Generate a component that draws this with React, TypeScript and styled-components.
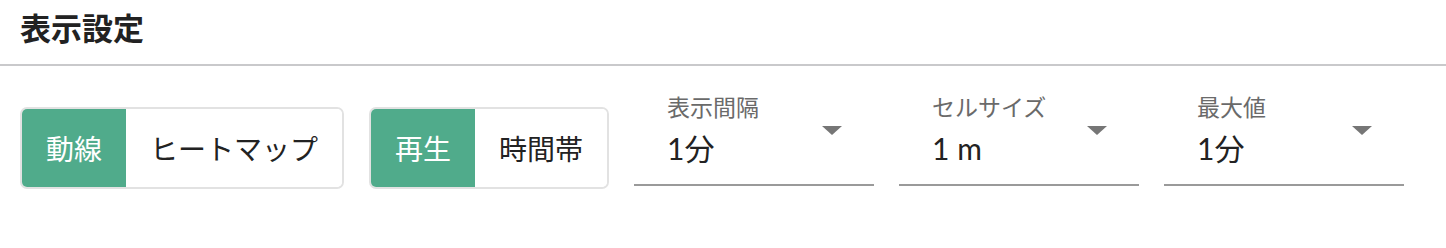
import React from "react";
import styled, { createGlobalStyle } from "styled-components";

const GlobalStyle = createGlobalStyle`
    body {
        margin: 0;
        background: #ffffff;
        font-family: "Lato", "Noto Sans CJK JP", sans-serif;
        color: #222222;
    }
`;

const Page = styled.div`
    width: 1446px;
    height: 248px;
    background: #ffffff;
`;

const Header = styled.div`
    padding: 8px 20px 16px;
    border-bottom: 2px solid #c9c9cb;
`;

const Title = styled.h1`
    margin: 0;
    font-size: 31px;
    line-height: 40px;
    font-weight: 700;
    color: #222222;
`;

const Controls = styled.div`
    display: flex;
    align-items: flex-start;
    gap: 25px;
    padding: 26px 20px 0;
`;

const ToggleGroup = styled.div`
    display: flex;
    margin-top: 15px;
    height: 82px;
    border: 2px solid #e2e2e2;
    border-radius: 7px;
    overflow: hidden;
    box-sizing: border-box;
`;

const ToggleButton = styled.button<{ $active?: boolean }>`
    display: flex;
    align-items: center;
    padding: 0 24px;
    border: none;
    margin: 0;
    font-family: inherit;
    font-size: 28px;
    background: ${(p) => (p.$active ? "#50ab8b" : "#ffffff")};
    color: ${(p) => (p.$active ? "#ffffff" : "#222222")};
    cursor: pointer;
`;

const Select = styled.div`
    display: flex;
    width: 240px;
    padding: 0 32px 18px 33px;
    box-sizing: border-box;
    border-bottom: 2px solid #9a9a9a;
`;

const Field = styled.div`
    display: flex;
    flex-direction: column;
    flex: 1;
`;

const Label = styled.span`
    font-size: 23px;
    line-height: 30px;
    color: #6a6a6a;
`;

const Value = styled.span`
    margin-top: 8px;
    font-size: 30px;
    line-height: 36px;
    color: #222222;
`;

const Arrow = styled.span`
    margin-top: 34px;
    width: 0;
    height: 0;
    border-left: 10px solid transparent;
    border-right: 10px solid transparent;
    border-top: 9px solid #767676;
`;

const selects = [
    { label: "表示間隔", value: "1分" },
    { label: "セルサイズ", value: "1 m" },
    { label: "最大値", value: "1分" },
];

const App: React.FC = () => {
    return (
        <Page>
            <GlobalStyle />
            <Header>
                <Title>表示設定</Title>
            </Header>

            <Controls>
                <ToggleGroup>
                    <ToggleButton $active>動線</ToggleButton>
                    <ToggleButton>ヒートマップ</ToggleButton>
                </ToggleGroup>
                <ToggleGroup>
                    <ToggleButton $active>再生</ToggleButton>
                    <ToggleButton>時間帯</ToggleButton>
                </ToggleGroup>

                {selects.map((s) => (
                    <Select key={s.label}>
                        <Field>
                            <Label>{s.label}</Label>
                            <Value>{s.value}</Value>
                        </Field>
                        <Arrow />
                    </Select>
                ))}
            </Controls>
        </Page>
    );
};

export default App;
